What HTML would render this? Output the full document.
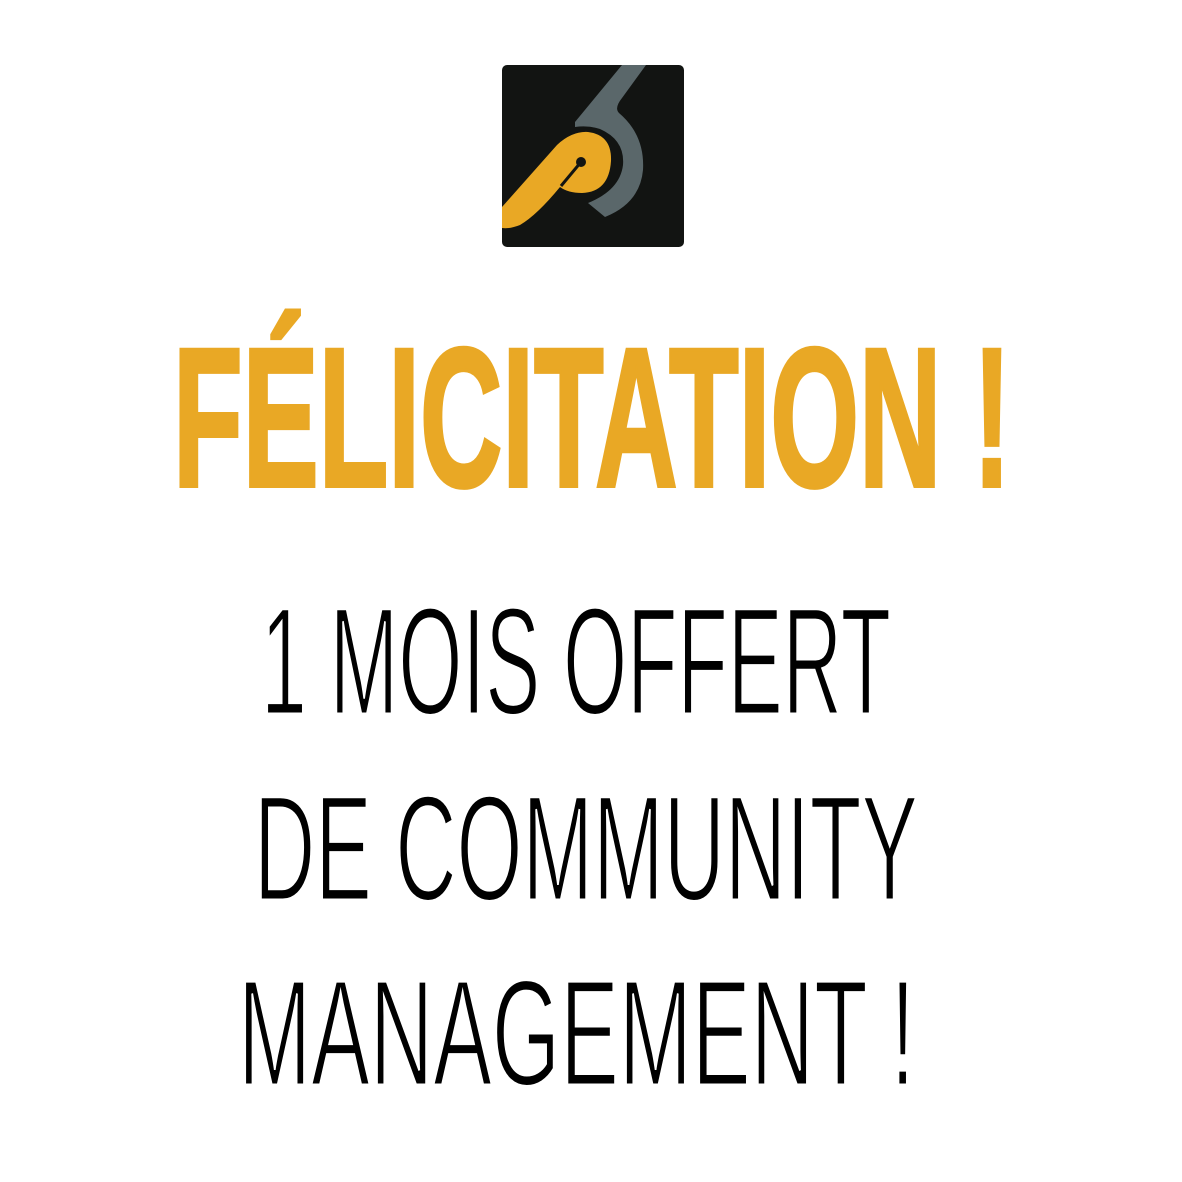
<!DOCTYPE html>
<html><head><meta charset="utf-8"><style>
html,body{margin:0;padding:0;background:#fff;width:1182px;height:1182px;overflow:hidden;position:relative}
.t{position:absolute;white-space:nowrap;font-family:"Liberation Sans",sans-serif;transform-origin:0 0}
#a{color:#E9A825;font-weight:bold;font-size:198px;line-height:198px;top:319px;left:173px;-webkit-text-stroke:4px #E9A825}
#b,#c,#d{color:#000;font-weight:normal;-webkit-text-stroke:3px #fff;paint-order:normal}
#b{font-size:153px;line-height:153px;top:585px;left:261px}
#c{font-size:150px;line-height:150px;top:773px;left:254px}
#d{font-size:151px;line-height:151px;top:957px;left:238px}
</style></head><body>
<svg style="position:absolute;left:502px;top:65px" width="182" height="182" viewBox="0 0 182 182">
<rect width="182" height="182" rx="5" fill="#121412"/>
<path d="M120,0 L144,0 L120,33 Q112,43 117,48 Q143,70 141,105 Q138,138 103,152 L86,138 Q118,125 121,100 Q123,75 98,64 Q86,60 73,62 L73,57 Z" fill="#5A676A"/>
<path d="M0,142 L55,80 Q70,66 86,67 Q110,70 109,96 Q107,127 80,128 Q66,128 58,122 Q35,150 18,160 Q8,164 0,163 Z" fill="#E9A825"/>
<path d="M79,97 L59,121" stroke="#121412" stroke-width="3"/>
<circle cx="79" cy="97" r="5" fill="#121412"/>
</svg>
<div class="t" id="a" data-w="838">FÉLICITATION !</div>
<div class="t" id="b" data-w="630">1 MOIS OFFERT</div>
<div class="t" id="c" data-w="664">DE COMMUNITY</div>
<div class="t" id="d" data-w="677">MANAGEMENT !</div>
<script>
document.querySelectorAll('.t').forEach(function(e){var w=e.getBoundingClientRect().width;e.style.transform='scaleX('+(e.getAttribute('data-w')/w)+')';});
</script>
</body></html>
